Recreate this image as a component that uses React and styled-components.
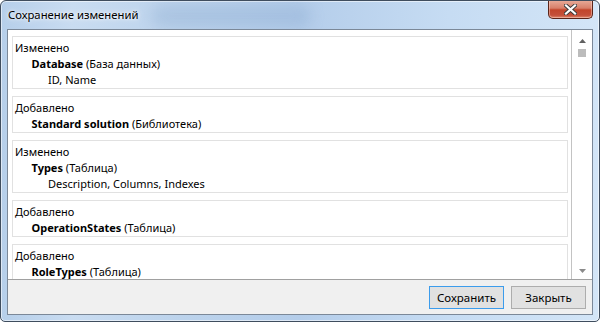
import React from 'react';
import styled, { createGlobalStyle } from 'styled-components';

const Global = createGlobalStyle`
  html, body { margin: 0; padding: 0; background: #ffffff; }
  body { font-family: "Noto Sans", "Open Sans", sans-serif; font-size: 11px; color: #000; }
`;

const Window = styled.div`
  position: relative;
  width: 600px;
  height: 322px;
  box-sizing: border-box;
  display: flex;
  flex-direction: column;
  border: 1px solid #3f4d5e;
  border-radius: 6px 6px 5px 5px;
  overflow: hidden;
  background: linear-gradient(to right, #b6cfea 0%, #c9dcf1 12%, #bcd3ec 30%, #b4cdea 50%, #c6dcf3 75%, #d3e5f7 100%);
  box-shadow: inset 0 0 0 1px rgba(255, 255, 255, 0.55);
`;

const GlassBlur = styled.div`
  position: absolute;
  left: 150px;
  top: 4px;
  width: 160px;
  height: 22px;
  border-radius: 11px;
  background: rgba(110, 145, 190, 0.22);
  filter: blur(7px);
  pointer-events: none;
`;

const TitleBar = styled.div`
  position: relative;
  height: 28px;
  display: flex;
  justify-content: space-between;
  align-items: flex-start;
  padding-left: 7px;
  padding-right: 6px;
  flex-shrink: 0;
`;

const Title = styled.div`
  font-family: "Noto Sans", "Open Sans", sans-serif;
  font-size: 11.3px;
  line-height: 16px;
  margin-top: 6px;
  color: #000;
  text-shadow: 0 0 6px rgba(255, 255, 255, 0.9), 0 0 3px rgba(255, 255, 255, 0.9);
`;

const CloseButton = styled.div`
  width: 45px;
  height: 19px;
  margin-top: -1px;
  box-sizing: border-box;
  border: 1px solid #5a2419;
  border-top: none;
  border-radius: 0 0 5px 5px;
  background: linear-gradient(to bottom, #e9ad9b 0%, #d8806a 45%, #c2452b 55%, #c4503a 85%, #e08a6c 100%);
  box-shadow: inset 0 0 0 1px rgba(255, 220, 210, 0.45);
  display: flex;
  align-items: center;
  justify-content: center;
`;

const Client = styled.div`
  position: relative;
  flex: 1;
  margin: 0 6px 6px 6px;
  border: 1px solid #7b8898;
  display: flex;
  flex-direction: column;
  min-height: 0;
  background: #fff;
`;

const ListArea = styled.div`
  flex: 1;
  min-height: 0;
  display: flex;
  background: #fff;
`;

const Items = styled.div`
  flex: 1;
  overflow: hidden;
  padding: 6px 3px 0 4px;
`;

const Card = styled.div`
  border: 1px solid #e1e1e1;
  padding: 3px 2px 0 2px;
  margin-bottom: 7px;
`;

const Line = styled.div`
  line-height: 16px;
  height: 16px;
  white-space: nowrap;
  padding-left: ${p => p.$level * 16.5}px;
`;

const Name = styled.span`
  font-weight: bold;
`;

const Scrollbar = styled.div`
  width: 20px;
  border-left: 1px solid #c3c3c3;
  display: flex;
  flex-direction: column;
  align-items: center;
  padding-top: 9px;
  padding-bottom: 6px;
`;

const Thumb = styled.div`
  width: 8px;
  height: 8px;
  margin-top: 6px;
  background: #bcbcbc;
`;

const Spacer = styled.div`
  flex: 1;
`;

const ButtonBar = styled.div`
  height: 35px;
  flex-shrink: 0;
  box-sizing: border-box;
  border-top: 1px solid #a0a0a0;
  background: #f0f0f0;
  display: flex;
  justify-content: flex-end;
  align-items: flex-start;
  gap: 7px;
  padding: 6px 6px 0 0;
`;

const Button = styled.button`
  width: 75px;
  height: 23px;
  box-sizing: border-box;
  border: 1px solid ${p => (p.$default ? '#3c9cec' : '#adadad')};
  background: #e1e1e1;
  font-family: "Noto Sans", "Open Sans", sans-serif;
  font-size: 11.5px;
  color: #000;
  padding: 0;
  margin: 0;
  line-height: 20px;
`;

const ArrowUp = () => (
  <svg width="7" height="4" viewBox="0 0 7 4"><path d="M0 4 L3.5 0 L7 4 Z" fill="#606060" /></svg>
);
const ArrowDown = () => (
  <svg width="7" height="4" viewBox="0 0 7 4"><path d="M0 0 L3.5 4 L7 0 Z" fill="#8a8a8a" /></svg>
);

const CloseGlyph = () => (
  <svg width="13" height="11" viewBox="0 0 13 11">
    <path d="M2 1.5 L11 9.5 M11 1.5 L2 9.5" stroke="#3b3b3b" strokeWidth="4" strokeLinecap="square" />
    <path d="M2 1.5 L11 9.5 M11 1.5 L2 9.5" stroke="#ffffff" strokeWidth="2.2" strokeLinecap="square" />
  </svg>
);

const changes = [
  { kind: 'Изменено', name: 'Database', type: 'База данных', props: 'ID, Name' },
  { kind: 'Добавлено', name: 'Standard solution', type: 'Библиотека' },
  { kind: 'Изменено', name: 'Types', type: 'Таблица', props: 'Description, Columns, Indexes' },
  { kind: 'Добавлено', name: 'OperationStates', type: 'Таблица' },
  { kind: 'Добавлено', name: 'RoleTypes', type: 'Таблица' },
];

export default function App() {
  return (
    <>
      <Global />
      <Window>
        <GlassBlur />
        <TitleBar>
          <Title>Сохранение изменений</Title>
          <CloseButton><CloseGlyph /></CloseButton>
        </TitleBar>
        <Client>
          <ListArea>
            <Items>
              {changes.map((c, i) => (
                <Card key={i}>
                  <Line $level={0}>{c.kind}</Line>
                  <Line $level={1}><Name>{c.name}</Name> ({c.type})</Line>
                  {c.props && <Line $level={2}>{c.props}</Line>}
                </Card>
              ))}
            </Items>
            <Scrollbar>
              <ArrowUp />
              <Thumb />
              <Spacer />
              <ArrowDown />
            </Scrollbar>
          </ListArea>
          <ButtonBar>
            <Button $default>Сохранить</Button>
            <Button>Закрыть</Button>
          </ButtonBar>
        </Client>
      </Window>
    </>
  );
}
